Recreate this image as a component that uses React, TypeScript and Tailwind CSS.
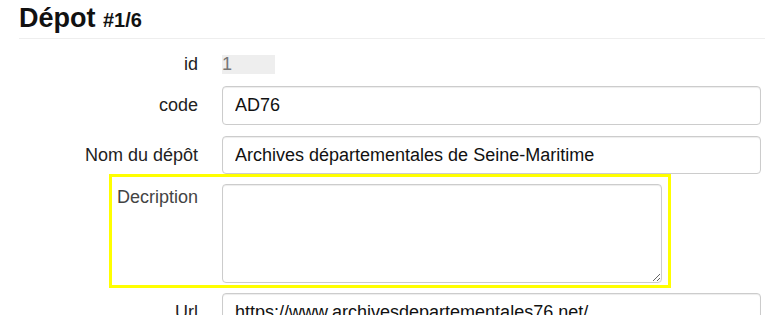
import React from 'react'

const font = { fontFamily: '"Liberation Sans", Arial, sans-serif' }

function Row({ label, children }: { label: string; children: React.ReactNode }) {
  return (
    <div className="flex items-center">
      <label className="w-[179px] shrink-0 text-right text-[18px] leading-[19px] text-[#222]">{label}</label>
      <div className="ml-[24px] w-[539px]">{children}</div>
    </div>
  )
}

function TextInput({ value, h = 'h-[39px]' }: { value: string; h?: string }) {
  return (
    <input
      type="text"
      defaultValue={value}
      className={`${h} w-full rounded-[4px] border border-[#ccc] bg-white px-3 text-[18px] text-[#111] shadow-[inset_0_1px_1px_rgba(0,0,0,0.075)] outline-none`}
    />
  )
}

export default function App() {
  return (
    <div className="w-[765px] h-[315px] overflow-hidden bg-white" style={font}>
      <div className="pl-[19px]">
        <h1 className="h-[39px] border-b border-[#eee] pt-[1px] text-[27px] leading-[34px] font-bold text-[#111]">
          Dépot <span className="text-[20px] leading-none">#1/6</span>
        </h1>

        <div className="mt-[16px] flex flex-col">
          <Row label="id">
            <div className="h-[19px] w-[53px] bg-[#eee] text-[18px] leading-[19px] text-[#777]">1</div>
          </Row>

          <div className="mt-[12px]">
            <Row label="code">
              <TextInput value="AD76" />
            </Row>
          </div>

          <div className="mt-[11px]">
            <Row label="Nom du dépôt">
              <TextInput value="Archives départementales de Seine-Maritime" h="h-[38px]" />
            </Row>
          </div>

          <div className="ml-[90px] flex w-[562px] border-[3px] border-[#ffff00] pt-[7px] pb-[2px] pr-[6px]">
            <label className="w-[86px] shrink-0 text-right text-[18px] leading-[26px] text-[#444]">Decription</label>
            <textarea className="ml-[24px] h-[99px] w-[440px] rounded-[4px] border border-[#ccc] bg-white px-3 py-1 text-[18px] shadow-[inset_0_1px_1px_rgba(0,0,0,0.075)] outline-none" />
          </div>

          <div className="mt-[5px]">
            <Row label="Url">
              <TextInput value="https://www.archivesdepartementales76.net/" />
            </Row>
          </div>
        </div>
      </div>
    </div>
  )
}
